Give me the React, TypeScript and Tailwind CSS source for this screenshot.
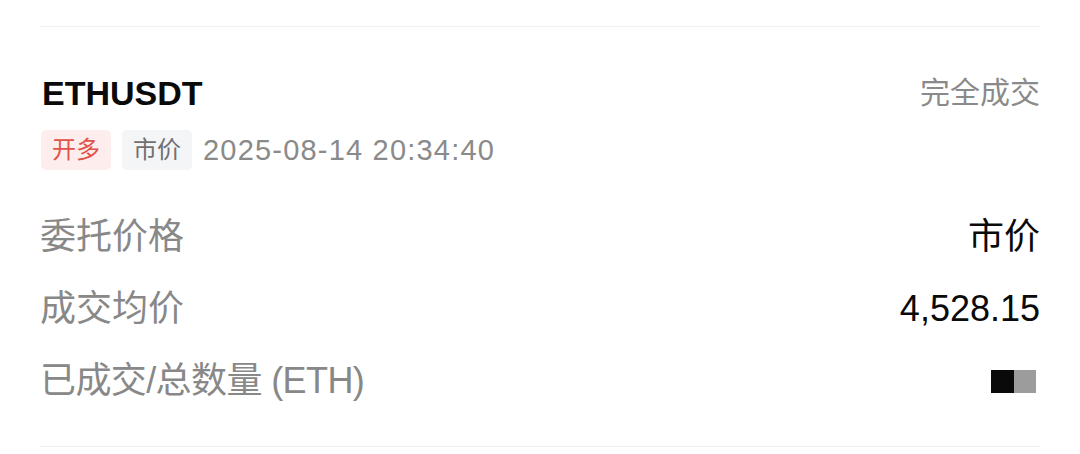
const font = "font-['Liberation_Sans','Noto_Sans_CJK_SC',sans-serif]";

function InfoRow({
  label,
  tight,
  children,
}: {
  label: string;
  tight?: boolean;
  children: React.ReactNode;
}) {
  return (
    <div className="flex h-[72px] items-center justify-between">
      <span className={`text-[36px] leading-none text-[#888888] ${tight ? "tracking-[-0.6px]" : ""}`}>{label}</span>
      {children}
    </div>
  );
}

export default function App() {
  return (
    <div className={`w-[1080px] h-[454px] bg-white ${font}`}>
      <div className="mx-[40px] pt-[26px]">
        <div className="border-t border-[#f1f1f1]" />

        {/* Header */}
        <div className="mt-[46px] flex h-[40px] items-center justify-between">
          <span className="pl-[2px] text-[34px] font-bold leading-none text-[#0a0a0a]">ETHUSDT</span>
          <span className="text-[30px] leading-none text-[#8a8a8a]">完全成交</span>
        </div>

        {/* Tags */}
        <div className="mt-[17px] flex h-[40px] items-center gap-[11px] pl-[1px]">
          <span className="flex h-[40px] items-center rounded-[5px] bg-[#fdeeed] px-[11px] text-[24px] leading-none text-[#e2524a]">
            开多
          </span>
          <span className="flex h-[40px] items-center rounded-[5px] bg-[#f4f5f7] px-[11px] text-[24px] leading-none text-[#707070]">
            市价
          </span>
          <span className="text-[29px] leading-none tracking-[1.2px] text-[#8a8a8a]">2025-08-14 20:34:40</span>
        </div>

        {/* Details */}
        <div className="mt-[31px]">
          <InfoRow label="委托价格">
            <span className="text-[36px] leading-none text-[#0a0a0a]">市价</span>
          </InfoRow>
          <InfoRow label="成交均价">
            <span className="text-[36px] leading-none text-[#0a0a0a]">4,528.15</span>
          </InfoRow>
          <InfoRow label="已成交/总数量 (ETH)" tight>
            <span className="flex h-[23px] pr-[4px]">
              <span className="w-[23px] bg-[#0a0a0a]" />
              <span className="w-[22px] bg-[#9c9c9c]" />
            </span>
          </InfoRow>
        </div>

        <div className="mt-[29px] border-t border-[#f1f1f1]" />
      </div>
    </div>
  );
}
